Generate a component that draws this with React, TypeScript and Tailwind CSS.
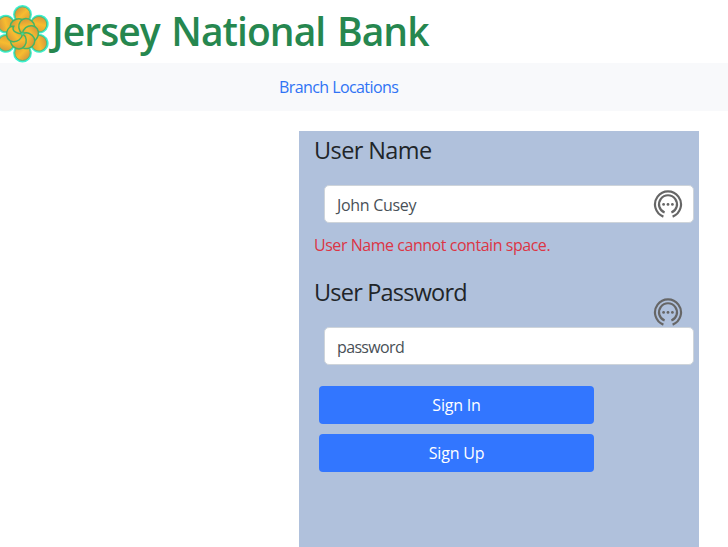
import type { ReactNode } from "react";

const angles = [0, 60, 120, 180, 240, 300];

function Logo() {
  return (
    <svg className="h-[63px] w-[50px] shrink-0" viewBox="0 0 50 63">
      <defs>
        <linearGradient id="petal" x1="0" y1="0" x2="1" y2="1">
          <stop offset="0.1" stopColor="#d2923a" />
          <stop offset="0.5" stopColor="#f7bc30" />
          <stop offset="0.95" stopColor="#dc9a34" />
        </linearGradient>
      </defs>
      <g fill="#3cf0cf">
        {angles.map((a) => (
          <circle key={a} cx="22.5" cy="14.4" r="9.4" transform={`rotate(${a} 22.5 33.7)`} />
        ))}
        <circle cx="22.5" cy="33.7" r="16" />
      </g>
      <g fill="url(#petal)" stroke="#55b878" strokeWidth="1">
        {angles.map((a) => (
          <circle key={a} cx="22.5" cy="14.6" r="7.7" transform={`rotate(${a} 22.5 33.7)`} />
        ))}
      </g>
      <circle cx="22.5" cy="33.7" r="12" fill="#4fa858" />
      <g fill="url(#petal)" stroke="#45b464" strokeWidth="1.5">
        {angles.map((a) => (
          <path
            key={a}
            d="M22.5 33.7C17.5 34 13.4 30 13.3 25.3C13.2 20.6 17 17.6 21.8 17.9C26 18.2 28.8 21 28.6 24C26.4 22.8 24.2 24 23.2 26.2C22.2 28.4 21.8 31 22.5 33.7Z"
            transform={`rotate(${a - 22} 22.5 33.7)`}
          />
        ))}
      </g>
      <circle cx="22.5" cy="33.7" r="1.3" fill="#45d890" />
    </svg>
  );
}

function KeyIcon({ className }: { className: string }) {
  return (
    <svg className={className} viewBox="0 0 30 30" fill="none" stroke="#666" strokeWidth="2.2">
      <path d="M10.4 27.6A13 13 0 1 1 19.6 27.6" />
      <path d="M11.6 23.6A9 9 0 1 1 18.4 23.6" />
      <g fill="#666" stroke="none">
        <circle cx="10.6" cy="15.4" r="1.4" />
        <circle cx="15" cy="15.4" r="1.4" />
        <circle cx="19.4" cy="15.4" r="1.4" />
      </g>
    </svg>
  );
}

function Field({ children, icon }: { children: ReactNode; icon: string }) {
  return (
    <div className="relative ml-[25px] flex h-[38px] w-[370px] items-center rounded-[5px] border border-[#ced4da] bg-white pt-0.5 pl-3 text-[#495057]">
      {children}
      <KeyIcon className={icon} />
    </div>
  );
}

export default function App() {
  return (
    <div className="h-[547px] w-[728px] overflow-hidden bg-white font-['Open_Sans','Noto_Sans',sans-serif] text-[16px] leading-6 text-[#212529]">
      <header className="flex h-[63px] items-center">
        <Logo />
        <h1 className="ml-[2px] pb-px text-[39px] leading-[48px] font-semibold whitespace-nowrap text-[#26874f]">
          <span className="tracking-[-0.95px] [word-spacing:2.5px]">Jersey National Bank</span>
        </h1>
      </header>
      <nav className="flex h-12 items-center bg-[#f8f9fb] pl-[279px]">
        <a className="tracking-[-0.58px] text-[#2f73f5]">Branch Locations</a>
      </nav>
      <main className="mt-5 ml-[299px] h-[416px] w-[400px] bg-[#b0c1dc]">
        <h2 className="flex h-[54px] items-start pt-[3px] pl-[15px] text-[23.5px] leading-8">
          <span className="tracking-[-0.6px]">User Name</span>
        </h2>
        <Field icon="absolute top-[3px] left-[328px] size-[30px]">
          <span className="tracking-[-0.3px]">John Cusey</span>
        </Field>
        <p className="flex h-[50px] items-start pt-[10px] pl-[15px] text-[#dc3545]">
          <span className="tracking-[-0.46px]">User Name cannot contain space.</span>
        </p>
        <h2 className="flex h-[54px] items-start pt-[3px] pl-[15px] text-[23.5px] leading-8">
          <span className="tracking-[-0.8px]">User Password</span>
        </h2>
        <Field icon="absolute -top-[31px] left-[328px] size-[30px]">
          <span className="tracking-[-0.65px]">password</span>
        </Field>
        <div className="mt-[21px] ml-5 flex w-[275px] flex-col gap-[10px] text-white">
          <button className="h-[38px] rounded bg-[#3276ff]">
            <span className="tracking-[-0.2px]">Sign In</span>
          </button>
          <button className="h-[38px] rounded bg-[#3276ff]">
            <span className="tracking-[-0.2px]">Sign Up</span>
          </button>
        </div>
      </main>
    </div>
  );
}
